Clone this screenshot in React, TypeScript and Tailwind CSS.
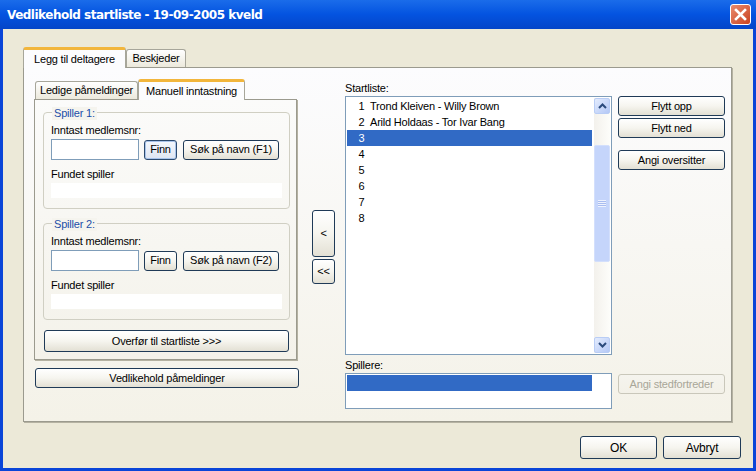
import type { ReactNode } from 'react';

const Btn = ({ children, className = '', focus = false, disabled = false }: { children: ReactNode; className?: string; focus?: boolean; disabled?: boolean }) => (
    <button
        className={`flex items-center justify-center rounded-[3px] border text-[11px] leading-none bg-gradient-to-b ${
            disabled
                ? 'border-[#c9c7ba] from-[#f5f4ee] to-[#f3f1e8] text-[#a8a698]'
                : focus
                  ? 'border-[#2c4a6e] from-[#f4f8fd] to-[#dfe6f2] text-black shadow-[inset_0_0_0_1px_#a9c4ea]'
                  : 'border-[#1f3a57] from-[#ffffff] via-[#f6f5ef] to-[#e3e0d4] text-black'
        } ${className}`}
    >
        {children}
    </button>
);

const Group = ({ title, search, focus }: { title: string; search: string; focus?: boolean }) => (
    <div className="relative h-[97px] w-[247px] rounded-[4px] border border-[#d0cfc3] px-[7px] pt-[11px]">
        <span className="absolute -top-[6px] left-[8px] bg-[#f5f4ee] px-[2px] text-[11px] leading-[13px] text-[#1c4fa8]">{title}</span>
        <div className="text-[11px] leading-[13px]">Inntast medlemsnr:</div>
        <div className="mt-[2px] flex items-center">
            <div className="h-[21px] w-[88px] border border-[#7f9db9] bg-white"></div>
            <Btn focus={focus} className="ml-[5px] h-[20px] w-[33px]">Finn</Btn>
            <Btn className="ml-[6px] h-[20px] w-[96px]">{search}</Btn>
        </div>
        <div className="mt-[8px] text-[11px] leading-[13px]">Fundet spiller</div>
        <div className="mt-[2px] h-[15px] w-[231px] bg-white"></div>
    </div>
);

const ScrollArrow = ({ up }: { up?: boolean }) => (
    <div className="flex h-[16px] w-[16px] items-center justify-center rounded-[2px] border border-[#b9cdf5] bg-gradient-to-br from-[#e4ecfd] to-[#b4c8f6]">
        <svg width="9" height="6" viewBox="0 0 9 6" fill="none" stroke="#2a4a7c" strokeWidth="2">
            <path d={up ? 'M1 5 L4.5 1.5 L8 5' : 'M1 1 L4.5 4.5 L8 1'} />
        </svg>
    </div>
);

export default function App() {
    const rows = ['Trond Kleiven - Willy Brown', 'Arild Holdaas - Tor Ivar Bang', '', '', '', '', '', ''];

    return (
        <div className="flex h-[471px] w-[756px] flex-col overflow-hidden bg-[#0a45d8] font-['Liberation_Sans',sans-serif] tracking-[-0.2px] text-black">
            {/* Title bar */}
            <div className="flex h-[29px] shrink-0 items-center justify-between bg-gradient-to-b from-[#1a6cea] via-[#0453e0] to-[#0445c8] pl-[7px] pr-[5px]">
                <span className="font-['DejaVu_Sans',sans-serif] text-[12px] font-bold tracking-[-0.5px] text-white">Vedlikehold startliste - 19-09-2005 kveld</span>
                <div className="flex h-[21px] w-[21px] items-center justify-center rounded-[3px] border border-white bg-gradient-to-br from-[#e98a6c] to-[#c8401d]">
                    <svg width="13" height="13" viewBox="0 0 13 13" stroke="white" strokeWidth="2.6" strokeLinecap="square">
                        <path d="M2 2 L11 11 M11 2 L2 11" />
                    </svg>
                </div>
            </div>

            {/* Client area */}
            <div className="mx-[3px] flex h-[439px] flex-col bg-[#ece9d8] pl-[20px] pr-[12px] pt-[18px]">
                <div className="flex h-[20px] items-end">
                    <div className="z-10 -mb-px flex h-[21px] w-[103px] items-center justify-center rounded-t-[3px] border-x border-[#a7a69a] border-t-[3px] border-t-[#f2b63c] bg-[#fcfcfe] text-[11px]">Legg til deltagere</div>
                    <div className="flex h-[18px] w-[60px] items-center justify-center rounded-t-[3px] border-x border-t border-[#a7a69a] bg-gradient-to-b from-white to-[#ece9dc] text-[11px]">Beskjeder</div>
                </div>

                {/* Outer tab panel */}
                <div className="flex h-[355px] w-[709px] border border-[#9b9a8e] bg-gradient-to-b from-[#fcfcfe] to-[#f4f2e8] pl-[10px] pt-[11px] shadow-[1px_1px_0_#b5b2a2]">
                    {/* Left column */}
                    <div className="w-[265px] shrink-0">
                        <div className="flex h-[20px] items-end pl-px">
                            <div className="flex h-[18px] w-[103px] items-center justify-center rounded-t-[3px] border-x border-t border-[#a7a69a] bg-gradient-to-b from-white to-[#ece9dc] text-[11px]">Ledige påmeldinger</div>
                            <div className="z-10 -mb-px flex h-[21px] w-[107px] items-center justify-center rounded-t-[3px] border-x border-[#a7a69a] border-t-[3px] border-t-[#f2b63c] bg-[#fcfcfe] text-[11px]">Manuell inntastning</div>
                        </div>
                        <div className="h-[261px] w-[263px] border border-[#9b9a8e] bg-gradient-to-b from-[#fbfbfa] to-[#f4f2ea] pl-[8px] pt-[12px] shadow-[1px_1px_0_#b5b2a2]">
                            <div className="flex flex-col gap-[14px]">
                                <Group title="Spiller 1:" search="Søk på navn (F1)" focus />
                                <Group title="Spiller 2:" search="Søk på navn (F2)" />
                            </div>
                            <Btn className="ml-px mt-[10px] h-[22px] w-[245px]">Overfør til startliste &gt;&gt;&gt;</Btn>
                        </div>
                        <Btn className="ml-px mt-[8px] h-[20px] w-[264px]">Vedlikehold påmeldinger</Btn>
                    </div>

                    {/* Move buttons */}
                    <div className="ml-[13px] flex w-[23px] shrink-0 flex-col gap-[2px] pt-[131px]">
                        <Btn className="h-[47px] w-[23px]">&lt;</Btn>
                        <Btn className="h-[25px] w-[23px]">&lt;&lt;</Btn>
                    </div>

                    {/* Lists */}
                    <div className="ml-[10px] w-[267px] shrink-0">
                        <div className="mt-[4px] h-[12px] text-[11px] leading-[11px]">Startliste:</div>
                        <div className="mt-px flex h-[259px] border border-[#7f9db9] bg-white p-px">
                            <div className="flex-1">
                                {rows.map((name, i) => (
                                    <div key={i} className={`flex h-[16px] items-center text-[11px] ${i === 2 ? 'bg-[#316ac5] text-white' : ''}`}>
                                        <span className="ml-[9px] w-[11px] shrink-0 text-center">{i + 1}</span>
                                        <span className="ml-[3px] whitespace-nowrap">{name}</span>
                                    </div>
                                ))}
                            </div>
                            {/* Scrollbar */}
                            <div className="ml-[2px] flex w-[16px] flex-col bg-gradient-to-r from-[#f3f1ec] to-[#fdfdfa]">
                                <ScrollArrow up />
                                <div className="flex-1 pt-[31px]">
                                    <div className="flex h-[117px] items-center justify-center rounded-[2px] border border-[#d3dffc] bg-[#c5d5fb]">
                                        <div className="h-[7px] w-[8px] bg-[repeating-linear-gradient(to_bottom,#eef2fe_0,#eef2fe_1px,#a9bdf0_1px,#a9bdf0_2px)]"></div>
                                    </div>
                                </div>
                                <ScrollArrow />
                            </div>
                        </div>
                        <div className="mt-[3px] h-[15px] text-[11px] leading-[14px]">Spillere:</div>
                        <div className="h-[36px] border border-[#7f9db9] bg-white p-px">
                            <div className="h-[16px] w-[245px] bg-[#316ac5]"></div>
                        </div>
                    </div>

                    {/* Right buttons */}
                    <div className="ml-[6px] flex w-[107px] shrink-0 flex-col pt-[17px]">
                        <Btn className="h-[20px] w-[107px]">Flytt opp</Btn>
                        <Btn className="mt-[2px] h-[20px] w-[107px]">Flytt ned</Btn>
                        <Btn className="mt-[12px] h-[20px] w-[107px]">Angi oversitter</Btn>
                        <Btn disabled className="mt-[204px] h-[20px] w-[107px]">Angi stedfortreder</Btn>
                    </div>
                </div>

                {/* Footer */}
                <div className="mt-[14px] flex justify-end gap-[6px]">
                    <Btn className="h-[23px] w-[77px] text-[12px]">OK</Btn>
                    <Btn className="h-[23px] w-[78px] text-[12px]">Avbryt</Btn>
                </div>
            </div>
        </div>
    );
}
